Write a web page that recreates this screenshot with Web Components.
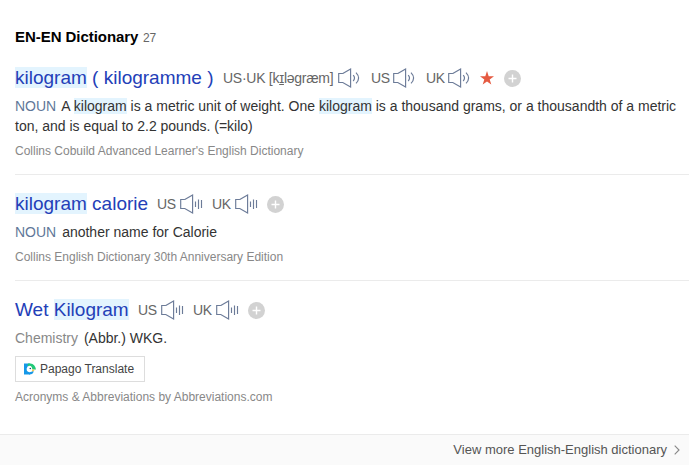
<!DOCTYPE html>
<html lang="en">
<head>
<meta charset="utf-8">
<title>EN-EN Dictionary</title>
<style>
html,body{margin:0;background:#fff}
body{font-family:"Liberation Sans",Arial,sans-serif;width:689px;height:465px;overflow:hidden}
.hl{background:#e3f4fe}
u{text-underline-offset:1px;text-decoration-thickness:1px}
</style>
</head>
<body>
<dict-panel>
  <dict-entry source="Collins Cobuild Advanced Learner's English Dictionary">
    <span slot="word"><span class="hl">kilogram</span> ( kilogramme )</span>
    <dict-sound slot="tools" wave="arc" style="width:148px;--label:115px">US·UK [k<u>ɪ</u>ləgræm]</dict-sound>
    <dict-sound slot="tools" wave="arc" style="--label:22px">US</dict-sound>
    <dict-sound slot="tools" wave="arc" style="--label:22px">UK</dict-sound>
    <dict-star slot="tools"></dict-star>
    <dict-add slot="tools"></dict-add>
    <span slot="tag">NOUN</span>
    A <span class="hl">kilogram</span> is a metric unit of weight. One <span class="hl">kilogram</span> is a thousand grams, or a thousandth of a metric ton, and is equal to 2.2 pounds. (=kilo)
  </dict-entry>
  <dict-entry source="Collins English Dictionary 30th Anniversary Edition" style="--word:142px">
    <span slot="word"><span class="hl">kilogram</span> calorie</span>
    <dict-sound slot="tools">US</dict-sound>
    <dict-sound slot="tools">UK</dict-sound>
    <dict-add slot="tools"></dict-add>
    <span slot="tag">NOUN</span>
    another name for Calorie
  </dict-entry>
  <dict-entry last source="Acronyms &amp; Abbreviations by Abbreviations.com" style="--word:123px;--tag:#888">
    <span slot="word">Wet <span class="hl">Kilogram</span></span>
    <dict-sound slot="tools">US</dict-sound>
    <dict-sound slot="tools">UK</dict-sound>
    <dict-add slot="tools"></dict-add>
    <span slot="tag">Chemistry</span>
    (Abbr.) WKG.
    <papago-button slot="action">Papago Translate</papago-button>
  </dict-entry>
</dict-panel>
<script>
function define(name, html, setup) {
  customElements.define(name, class extends HTMLElement {
    constructor() {
      super();
      this.attachShadow({mode: 'open'}).innerHTML = html;
    }
    connectedCallback() { if (setup) setup(this, this.shadowRoot); }
  });
}

define('dict-panel', `
<style>
:host{display:flex;flex-direction:column;height:465px;background:#fff}
header{display:flex;align-items:baseline;gap:4.500px;padding:27px 0 0 15px;height:65px;box-sizing:border-box;line-height:20px}
h2{margin:0;font-size:15px;font-weight:bold;color:#000;letter-spacing:-.05px}
.n{font-size:12px;color:#666}
main{flex:1;padding-left:15px}
footer{height:31px;box-sizing:border-box;border-top:1px solid #ebebeb;background:#fafafa;display:flex;justify-content:flex-end;align-items:center;gap:7px;padding:0 9px 1px 0;font-size:13px;color:#555}
</style>
<header><h2>EN-EN Dictionary</h2><span class="n">27</span></header>
<main><slot></slot></main>
<footer><span>View more English-English dictionary</span><svg width="6" height="10" viewBox="0 0 6 10" fill="none" stroke="#888" stroke-width="1.1"><path d="M.7.7 5 5 .7 9.3"/></svg></footer>`);

define('dict-entry', `
<style>
:host{display:block;border-bottom:1px solid #ebebeb;padding-bottom:14px;margin-bottom:16px}
:host([last]){border:0;margin:0;padding:0}
.head{display:flex;align-items:center;height:26px}
.word{width:var(--word,208px);font-size:19px;line-height:26px;color:#2340b8;white-space:nowrap}
.def{margin-top:5px;font-size:14px;line-height:20px;color:#333}
.tag{color:var(--tag,#5f7799);margin-right:2px}
.src{margin-top:6px;font-size:12px;line-height:18px;color:#888}
::slotted(papago-button){margin-top:8px}
</style>
<div class="head"><div class="word"><slot name="word"></slot></div><slot name="tools"></slot></div>
<div class="def"><span class="tag"><slot name="tag"></slot></span><slot></slot></div>
<slot name="action"></slot>
<div class="src"></div>`, (el, root) => {
  root.querySelector('.src').textContent = el.getAttribute('source');
});

define('dict-sound', `
<style>
:host{display:flex;align-items:center;width:55px;font-size:14px;letter-spacing:-.27px;line-height:20px;color:#666;white-space:nowrap;--l:var(--label,23px)}
span{width:var(--l);flex:none}
svg{flex:none}
</style>
<span><slot></slot></span>
<svg width="23" height="20" viewBox="0 0 23 20" fill="none" stroke="#6c7b98" stroke-width="1.15"><path d="M4.800 5.500H.7V14.500H4.800L12.600 19V1L4.800 5.500"/><g id="w"></g></svg>`, (el, root) => {
  root.getElementById('w').innerHTML = el.getAttribute('wave') === 'arc'
    ? '<path d="M15.200 7.200Q17.800 10 15.200 13M18 4.600Q23.200 10 18 15.400"/>'
    : '<path d="M15.500 7.500V13M18.500 5.500V15M21.500 6V14"/>';
});

define('dict-star', `
<style>:host{display:block;width:25px;height:16px;margin-left:-2px}svg{display:block}</style>
<svg width="16" height="16" viewBox="0 0 16 16"><path fill="#e55a41" d="M8 1 9.700 6.200H15L10.700 9.400 12.300 14.500 8 11.400 3.700 14.500 5.300 9.400 1 6.200H6.300Z"/></svg>`);

define('dict-add', `
<style>:host{display:block;height:17px}svg{display:block}</style>
<svg width="17" height="17" viewBox="0 0 17 17"><circle cx="8.500" cy="8.500" r="8.500" fill="#d2d2d2"/><path d="M8.500 4.500V12.500M4.500 8.500H12.500" stroke="#fff" stroke-width="1.400"/></svg>`);

define('papago-button', `
<style>
:host{display:flex;align-items:center;gap:4px;width:130px;height:26px;box-sizing:border-box;border:1px solid #ddd;padding-left:7px;font-size:12px;color:#444;background:#fff}
svg{flex:none}
</style>
<svg width="13" height="12" viewBox="0 0 13 12"><path fill="#1598e8" d="M1 .5H7V11.500H1Z"/><path fill="#1598e8" d="M6 7.500H10.500Q11 11.500 6 11.500Z"/><path fill="#22c878" d="M5 .5H7.500Q12 1 13 6.500H9Q8 3 4.500 3Z"/><path fill="#fff" d="M3.600 5.700Q4 3 6.500 2.800Q9 3 9.300 6.200L10.500 7.800Q7 10 5 8.800Q3.500 8 3.600 5.700Z"/><circle cx="7.300" cy="5.500" r=".8" fill="#17466d"/><path fill="#f7c33c" d="M9 6.500 12 6.800 9.300 8.800Z"/></svg>
<span><slot></slot></span>`);
</script>
</body>
</html>
